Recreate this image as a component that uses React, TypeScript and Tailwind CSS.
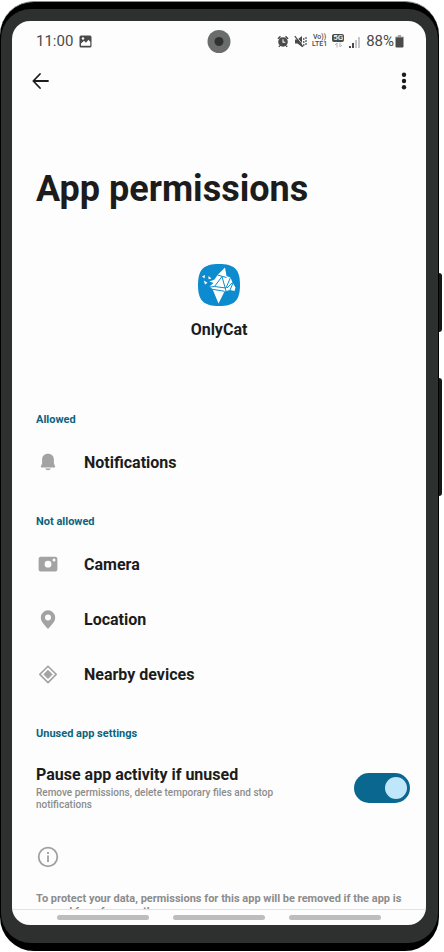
import { useState } from "react";
import type { ReactNode } from "react";

function SectionLabel({ children }: { children: ReactNode }) {
  return <h2 className="pt-[22px] pb-[5px] text-[11px] leading-5 font-bold text-[#0b6480]">{children}</h2>;
}

function PermissionRow({ icon, label }: { icon: ReactNode; label: string }) {
  return (
    <li>
      <button type="button" className="flex h-[55px] w-full items-center gap-6 text-left">
        <span className="flex w-6 justify-center text-[#a3a3a3]">{icon}</span>
        <span className="text-base font-bold">{label}</span>
      </button>
    </li>
  );
}

function BellIcon() {
  return (
    <svg width="20" height="20" viewBox="0 0 20 20" fill="currentColor" aria-hidden="true">
      <path d="M10 .8c-3.800 0-5.900 2.600-5.900 5.900v3.700L2.900 13.200c-.3.600 0 1.200.700 1.200h12.800c.700 0 1-.600.700-1.200l-1.200-2.800V6.700c0-3.300-2.100-5.900-5.900-5.900z" />
      <path d="M7.200 15.600h5.600c-.5 1-1.500 1.700-2.800 1.700s-2.300-.7-2.800-1.700z" />
    </svg>
  );
}

function CameraIcon() {
  return (
    <svg width="20" height="20" viewBox="0 0 20 20" fill="currentColor" aria-hidden="true">
      <path
        fillRule="evenodd"
        d="M2.800 1.800h14.400a2.200 2.200 0 0 1 2.200 2.200v10.200a2.200 2.200 0 0 1-2.200 2.200H2.800a2.200 2.200 0 0 1-2.200-2.200V4a2.200 2.200 0 0 1 2.200-2.200zm7.200 4a3.400 3.400 0 1 0 0 6.800 3.400 3.400 0 0 0 0-6.800zm6-2.200a1.500 1.500 0 1 0 0 3 1.500 1.500 0 0 0 0-3z"
      />
    </svg>
  );
}

function PinIcon() {
  return (
    <svg width="20" height="20" viewBox="0 0 20 20" fill="currentColor" aria-hidden="true">
      <path
        fillRule="evenodd"
        d="M10 .3a7.200 7.200 0 0 0-7.200 7.200c0 4.600 3.900 7.300 6.400 10.800.4.600 1.200.600 1.600 0 2.500-3.500 6.400-6.200 6.400-10.800A7.200 7.200 0 0 0 10 .3zm0 4.200a3 3 0 1 0 0 6 3 3 0 0 0 0-6z"
      />
    </svg>
  );
}

function NearbyIcon() {
  return (
    <svg width="20" height="20" viewBox="0 0 20 20" aria-hidden="true">
      <path d="M10 1.200 18.200 9.400 10 17.600 1.800 9.400z" fill="none" stroke="currentColor" strokeWidth="1.600" strokeLinejoin="round" />
      <path d="M10 5.300 14.100 9.400 10 13.500 5.900 9.400z" fill="currentColor" stroke="currentColor" strokeLinejoin="round" />
    </svg>
  );
}

function AppLogo() {
  return (
    <svg width="44" height="44" viewBox="0 0 44 44" role="img" aria-label="OnlyCat logo">
      <path d="M22 1C7 1 1 6 1 22s6 21 21 21 21-5 21-21S37 1 22 1z" fill="#0d8bcf" />
      <path
        d="M28 4.500 20.500 12 17.500 16.500 12.500 18.500 16.500 20 12.500 23.500 15.500 26 21.500 40.500 27.500 28.500 33 27 37.500 28 38.500 24.500 35.500 19.500 33.500 14.500 29.500 13z"
        fill="#fff"
      />
      <path
        d="M20.500 12 29.500 14.500M25 13.500 17.500 23.500 13 24M25 13.500 29 28M17.500 23.500 29 25 33.500 14.500M15.500 26.300 27.500 28.300M30 25 35.500 19.500M33 27 36 20"
        fill="none"
        stroke="#0d8bcf"
        strokeWidth="1"
      />
      <path d="M5 13.500 8 12l-.5 3.500zM6.800 17.500l3.700 2.300L8 21.500zM11.500 13l3 2.500-3 .8z" fill="#fff" />
    </svg>
  );
}

function StatusBar() {
  return (
    <div className="relative flex h-10 shrink-0 items-center justify-between pr-[22px] pl-6 text-[15px] leading-5 text-[#4a4a4a]">
      <div className="flex items-center gap-[6px]">
        <span>11:00</span>
        <svg width="13" height="13" viewBox="0 0 13 13" aria-hidden="true">
          <rect x=".5" y=".5" width="12" height="12" rx="1.500" fill="#4a4a4a" />
          <path d="M2 10.800V8.500l3-2.800 2 2 2.500-3L11.300 7v3.800z" fill="#fff" />
          <circle cx="4" cy="3.500" r="1.200" fill="#fff" />
        </svg>
      </div>
      <div className="absolute top-[9px] left-1/2 flex size-[23px] -translate-x-1/2 items-center justify-center rounded-full bg-[#6b6d6c]">
        <div className="size-[9px] rounded-full bg-[#303231]" />
      </div>
      <div className="flex items-center gap-[5px]">
        <svg width="12" height="13" viewBox="0 0 13 13" aria-hidden="true">
          <circle cx="6.500" cy="7" r="5.200" fill="#4a4a4a" />
          <path d="M1 3.500 3.800 1M12 3.500 9.200 1M3 11l-1 1.200M10 11l1 1.200" stroke="#4a4a4a" strokeWidth="1.600" />
          <path d="M6.500 4v3.300H9" fill="none" stroke="#fff" strokeWidth="1.100" />
        </svg>
        <svg width="13" height="13" viewBox="0 0 13 13" aria-hidden="true">
          <path d="M1 4.500h2.500L8 1v11L3.500 8.500H1z" fill="#4a4a4a" />
          <path d="M1.800 1 10 11" stroke="#fff" strokeWidth=".8" />
          <path d="M.8 1.200 9 11.800" stroke="#4a4a4a" strokeWidth="1.200" />
          <path d="M9.800 3v8M12 2v9" stroke="#4a4a4a" strokeWidth="1.200" strokeDasharray="2 1" />
        </svg>
        <span className="flex flex-col items-center text-[7px] leading-[7px] font-medium">
          <span>Vo))</span>
          <span>LTE1</span>
        </span>
        <span className="flex flex-col items-center">
          <span className="rounded-[2px] bg-[#4a4a4a] px-px text-[8px] leading-[8px] font-medium text-white">5G</span>
          <svg width="9" height="6" viewBox="0 0 9 6" fill="none" stroke="#b5b5b5" aria-hidden="true">
            <path d="M3 5.500V1L1 3M6 .5V5l2-2" />
          </svg>
        </span>
        <svg width="12" height="13" viewBox="0 0 12 13" aria-hidden="true">
          <path d="M0 11h2v2H0zM3 8h2v5H3z" fill="#4a4a4a" />
          <path d="M6 5h2v8H6zM9 2h2v11H9z" fill="#c6c6c6" />
        </svg>
        <div className="flex items-center gap-px">
          <span>88%</span>
          <svg width="9" height="13" viewBox="0 0 9 13" aria-hidden="true">
            <path d="M3 0h3v1.500h2.500V3H.5V1.500H3z" fill="#a5a5a5" />
            <path d="M.5 2.500h8V11.500a1 1 0 0 1-1 1h-6a1 1 0 0 1-1-1z" fill="#4a4a4a" />
          </svg>
        </div>
      </div>
    </div>
  );
}

export default function App() {
  const [paused, setPaused] = useState(true);

  return (
    <div className="relative h-screen bg-white pt-px pr-[5px] pb-px font-['Roboto',sans-serif] text-[#1c1c1c]">
      <div className="absolute top-[273px] right-[2px] h-[59px] w-2 rounded-r-[3px] bg-[#171918]" />
      <div className="absolute top-[378px] right-[2px] h-[118px] w-2 rounded-r-[3px] bg-[#171918]" />
      <div className="relative h-full rounded-[34px] border-t border-[#8a8f8c] bg-black px-px pt-[7px] pb-2">
        <div className="h-full rounded-[30px] bg-[#2e302f] pt-3 pr-3 pb-[18px] pl-[11px]">
          <main className="flex h-full flex-col overflow-hidden rounded-[18px] bg-[#fdfdfd]">
            <StatusBar />
            <header className="flex h-10 shrink-0 items-center justify-between pr-3 pl-[18px]">
              <button type="button" aria-label="Back" className="flex size-5 items-center justify-center">
                <svg width="18" height="18" viewBox="0 0 18 18" fill="none" stroke="#1c1c1c" strokeWidth="1.800" strokeLinecap="round" strokeLinejoin="round" aria-hidden="true">
                  <path d="M17 9H2.500M9 2 2.300 9l6.700 7" />
                </svg>
              </button>
              <button type="button" aria-label="More options" className="flex size-5 items-center justify-center">
                <svg width="6" height="18" viewBox="0 0 6 18" fill="#1c1c1c" aria-hidden="true">
                  <circle cx="3" cy="2.800" r="2.200" />
                  <circle cx="3" cy="9" r="2.200" />
                  <circle cx="3" cy="15.200" r="2.200" />
                </svg>
              </button>
            </header>
            <div className="min-h-0 flex-1 overflow-hidden px-6">
              <h1 className="pt-16 text-4xl leading-12 font-bold">App permissions</h1>
              <div className="flex flex-col items-center pt-[50px] pb-[46px]">
                <AppLogo />
                <p className="pt-[11px] text-base leading-6 font-bold">OnlyCat</p>
              </div>
              <section>
                <SectionLabel>Allowed</SectionLabel>
                <ul>
                  <PermissionRow icon={<BellIcon />} label="Notifications" />
                </ul>
              </section>
              <section>
                <SectionLabel>Not allowed</SectionLabel>
                <ul>
                  <PermissionRow icon={<CameraIcon />} label="Camera" />
                  <PermissionRow icon={<PinIcon />} label="Location" />
                  <PermissionRow icon={<NearbyIcon />} label="Nearby devices" />
                </ul>
              </section>
              <section>
                <SectionLabel>Unused app settings</SectionLabel>
                <label className="flex items-center justify-between pt-4">
                  <span className="flex max-w-64 flex-col">
                    <span className="text-base leading-5 font-bold">Pause app activity if unused</span>
                    <span className="pt-[2px] text-[10px] leading-3 font-medium text-[#8c8c8c]">
                      Remove permissions, delete temporary files and stop notifications
                    </span>
                  </span>
                  <span className="relative -mr-2 flex h-[30px] w-14 shrink-0">
                    <input
                      type="checkbox"
                      role="switch"
                      aria-label="Pause app activity if unused"
                      checked={paused}
                      onChange={(event) => setPaused(event.target.checked)}
                      className="peer h-full w-full appearance-none rounded-full bg-[#9a9a9a] checked:bg-[#0a6890]"
                    />
                    <span className="pointer-events-none absolute top-1 left-1 size-[22px] rounded-full bg-[#bfe6fb] peer-checked:left-[31px]" />
                  </span>
                </label>
                <svg className="mt-[34px]" width="24" height="24" viewBox="0 0 24 24" fill="none" stroke="#a0a0a0" strokeWidth="1.800" aria-hidden="true">
                  <circle cx="12" cy="12" r="9.300" />
                  <path d="M12 10.500V17M12 7v2" />
                </svg>
                <p className="-mr-3 pt-[23px] text-[11px] leading-[13px] font-bold text-[#8c8c8c]">
                  To protect your data, permissions for this app will be removed if the app is unused for a few months.
                </p>
              </section>
            </div>
            <nav aria-label="Gestures" className="flex h-4 shrink-0 items-center justify-center gap-6 border-t border-[#e2e2e2]">
              <span className="h-[5px] w-[92px] rounded-full bg-[#bdbdbd]" />
              <span className="h-[5px] w-[92px] rounded-full bg-[#bdbdbd]" />
              <span className="h-[5px] w-[92px] rounded-full bg-[#bdbdbd]" />
            </nav>
          </main>
        </div>
      </div>
    </div>
  );
}
